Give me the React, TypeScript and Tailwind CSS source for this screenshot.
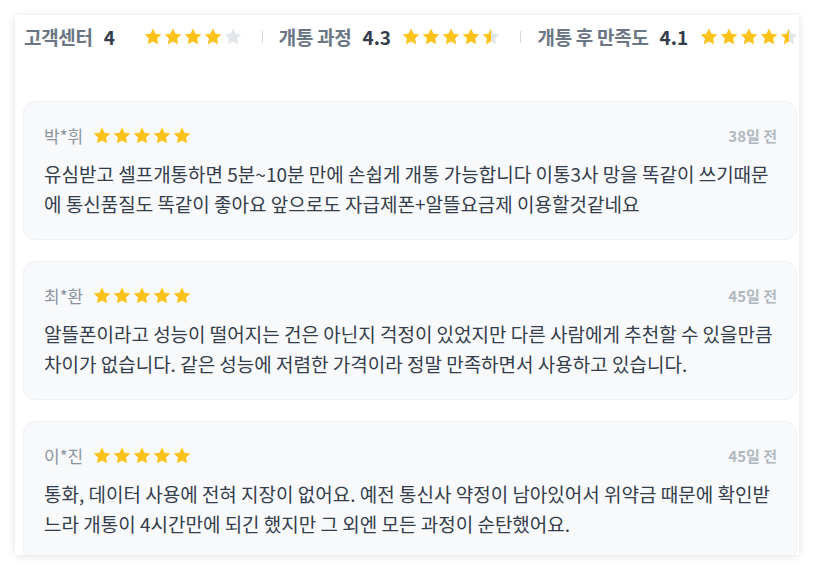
const summary = [
  { label: "고객센터", score: "4", value: 4 },
  { label: "개통 과정", score: "4.3", value: 4.5 },
  { label: "개통 후 만족도", score: "4.1", value: 4.5 },
];

const reviews = [
  {
    name: "박*휘",
    date: "38일 전",
    text: "유심받고 셀프개통하면 5분~10분 만에 손쉽게 개통 가능합니다 이통3사 망을 똑같이 쓰기때문에 통신품질도 똑같이 좋아요 앞으로도 자급제폰+알뜰요금제 이용할것같네요",
  },
  {
    name: "최*환",
    date: "45일 전",
    text: "알뜰폰이라고 성능이 떨어지는 건은 아닌지 걱정이 있었지만 다른 사람에게 추천할 수 있을만큼 차이가 없습니다. 같은 성능에 저렴한 가격이라 정말 만족하면서 사용하고 있습니다.",
  },
  {
    name: "이*진",
    date: "45일 전",
    text: "통화, 데이터 사용에 전혀 지장이 없어요. 예전 통신사 약정이 남아있어서 위약금 때문에 확인받느라 개통이 4시간만에 되긴 했지만 그 외엔 모든 과정이 순탄했어요.",
  },
];

const STAR = "M10 0.6l2.8 5.8 6.4.8-4.7 4.4 1.2 6.35L10 14.9l-5.7 3.05 1.2-6.35L.8 7.2l6.4-.8z";

function Star({ fill, id }: { fill: number; id: string }) {
  return (
    <svg width="18" height="18" viewBox="0 0 20 20" className="shrink-0">
      <defs>
        <linearGradient id={id}>
          <stop offset={`${fill * 100}%`} stopColor="#fcc21b" />
          <stop offset={`${fill * 100}%`} stopColor="#e2e5e9" />
        </linearGradient>
      </defs>
      <path d={STAR} fill={`url(#${id})`} />
    </svg>
  );
}

function Stars({ value, id }: { value: number; id: string }) {
  return (
    <div className="flex items-center gap-[2px]">
      {[0, 1, 2, 3, 4].map((i) => (
        <Star key={i} id={`${id}-${i}`} fill={Math.max(0, Math.min(1, value - i))} />
      ))}
    </div>
  );
}

export default function App() {
  return (
    <div className="bg-white w-[814px] h-[570px] p-[15px]" style={{ fontFamily: '"Noto Sans CJK KR", "Noto Sans", sans-serif' }}>
      <div className="w-[784px] h-[540px] overflow-hidden bg-white shadow-[0_1px_8px_rgba(0,0,0,0.12)] pl-2 pr-[2px]">
        <div className="flex items-center h-6 mt-[10px] pl-px whitespace-nowrap">
          {summary.map((s, idx) => (
            <div key={s.label} className="flex items-center shrink-0">
              {idx > 0 && <span className="w-px h-3 bg-[#d5d9de] ml-5 mr-[16px]" />}
              <span className="text-[19px] font-semibold text-[#6b7684] tracking-[-0.3px]">{s.label}</span>
              <span className="ml-[11px] w-[28px] text-[19px] font-bold text-[#333d4b]">{s.score}</span>
              <div className="ml-[12px]">
                <Stars value={s.value} id={`sum${idx}`} />
              </div>
            </div>
          ))}
        </div>

        <div className="flex flex-col gap-[21px] mt-[52px]">
          {reviews.map((r, idx) => (
            <div key={idx} className="w-[774px] shrink-0 rounded-xl border border-[#eef0f3] bg-[#f8f9fb] pl-[20px] pr-[19px] pt-[24px] pb-[20px]">
              <div className="flex items-center justify-between h-5">
                <div className="flex items-center gap-[10px]">
                  <span className="text-[17px] text-[#8b95a1]">{r.name}</span>
                  <Stars value={5} id={`rv${idx}`} />
                </div>
                <span className="text-[15px] font-semibold text-[#b0b8c1]">{r.date}</span>
              </div>
              <p className="mt-[13px] text-[19px] leading-[30px] text-[#333d4b]">{r.text}</p>
            </div>
          ))}
        </div>
      </div>
    </div>
  );
}
